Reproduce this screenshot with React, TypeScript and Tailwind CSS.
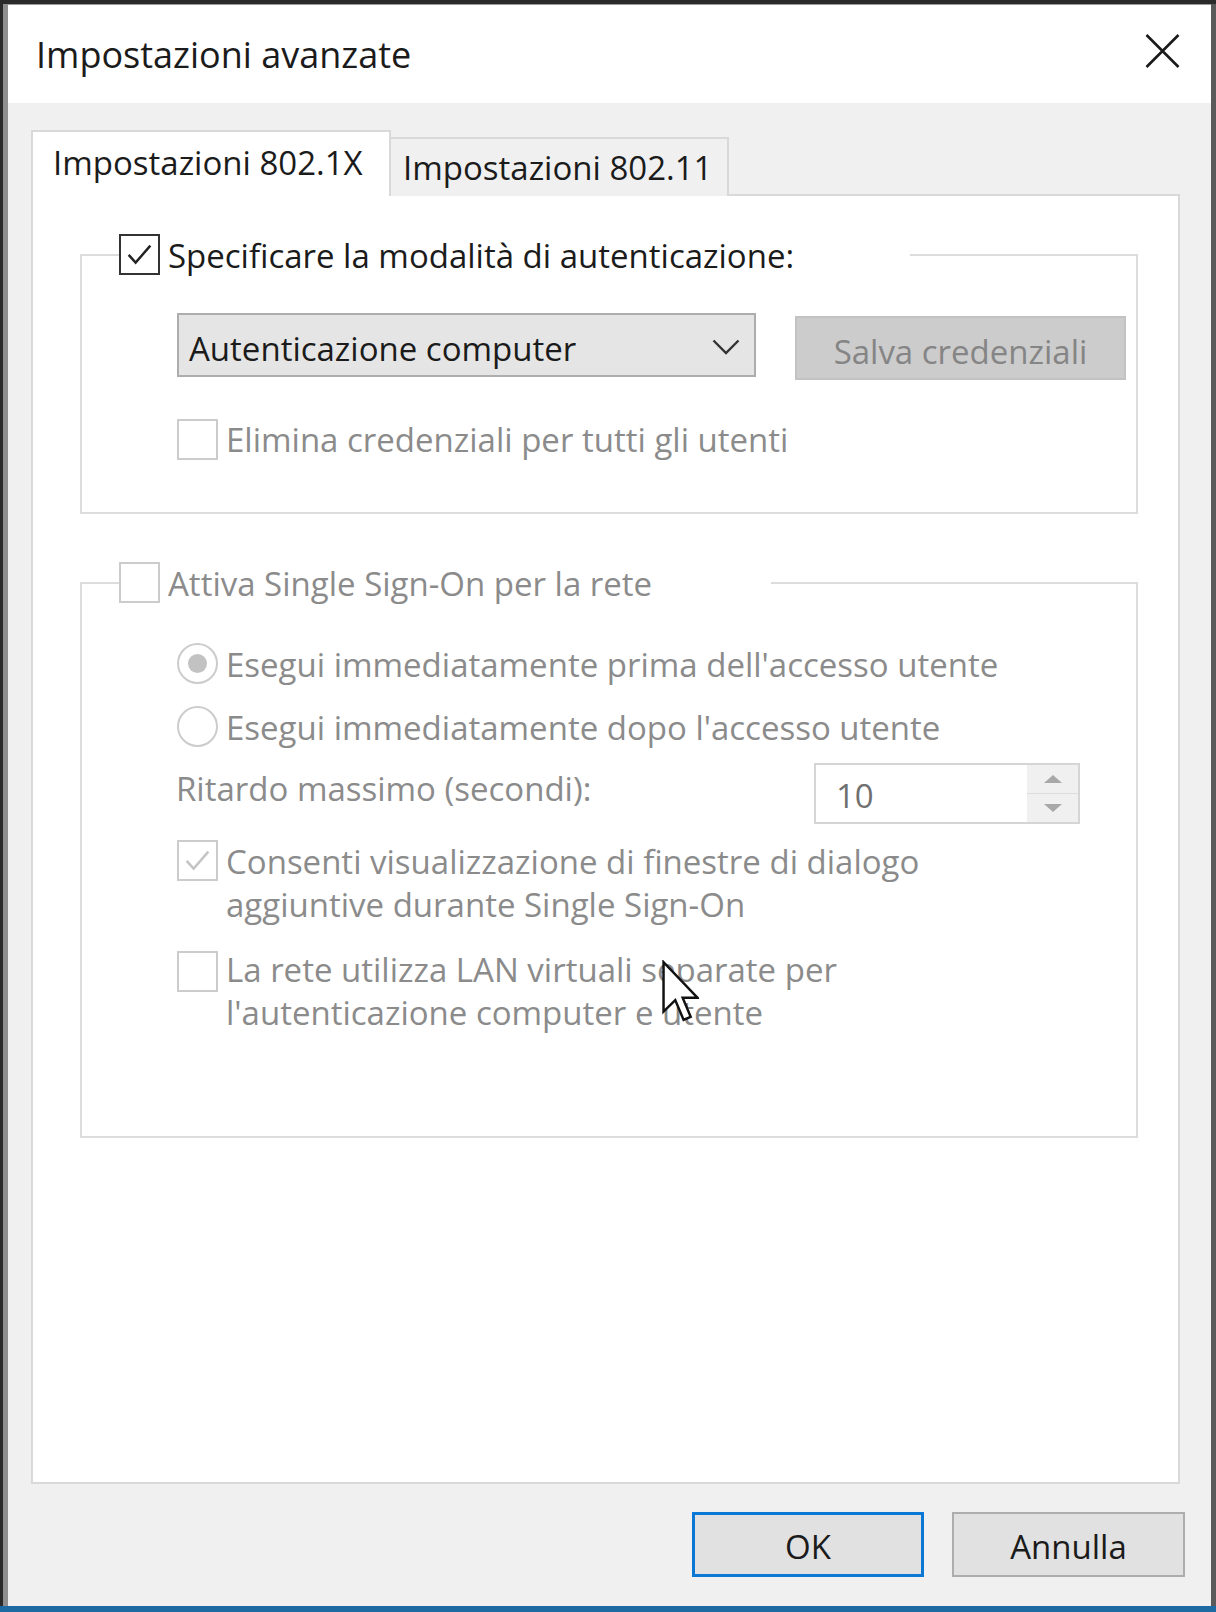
import React from "react";

const font = "font-['Open_Sans','Noto_Sans',sans-serif]";

function CheckMark({ color }: { color: string }) {
  return (
    <svg viewBox="0 0 16 16" className="w-full h-full" fill="none">
      <polyline points="2.4,8.2 6,12.2 13.6,3.4" stroke={color} strokeWidth="1.25" />
    </svg>
  );
}

function Checkbox({ checked, disabled }: { checked?: boolean; disabled?: boolean }) {
  return (
    <div
      className={
        disabled
          ? "w-[41px] h-[41px] shrink-0 border-2 border-[#cccccc] bg-white p-[3px]"
          : "w-[41px] h-[41px] shrink-0 border-2 border-[#333333] bg-white p-[3px]"
      }
    >
      {checked && <CheckMark color={disabled ? "#c4c4c4" : "#222222"} />}
    </div>
  );
}

function Radio({ checked }: { checked?: boolean }) {
  return (
    <div className="w-[41px] h-[41px] shrink-0 rounded-full border-2 border-[#cccccc] bg-white flex items-center justify-center">
      {checked && <div className="w-[19px] h-[19px] rounded-full bg-[#c2c2c2]" />}
    </div>
  );
}

function Cursor() {
  return (
    <svg
      viewBox="0 0 12 20"
      className="absolute left-[662px] top-[960px] w-[37px] h-[63px]"
    >
      <polygon
        points="0.5,0.5 0.5,16.5 4.3,12.8 7,19.2 9.3,18.2 6.7,12 11.5,12"
        fill="#ffffff"
        stroke="#111111"
        strokeWidth="0.8"
        strokeLinejoin="miter"
      />
    </svg>
  );
}

export default function App() {
  return (
    <div className={`relative w-[1216px] h-[1612px] bg-[#2a2a2a] flex flex-col ${font}`}>
      <div className="flex flex-1 pt-[4px] pl-[3px]">
        <div className="w-[5px] bg-[#8e8e8e]" />
        <div className="flex-1 flex flex-col bg-[#f0f0f0] border-t border-[#9a9a9a]">
          {/* title bar */}
          <div className="h-[98px] bg-white flex items-center justify-between pl-[28px] pr-[31px]">
            <span className="text-[36px] text-[#1b1b1b] leading-none pt-[2px]">
              Impostazioni avanzate
            </span>
            <svg viewBox="0 0 34 34" className="w-[35px] h-[34px] mb-[6px]" fill="none">
              <path d="M1 1 L33 33 M33 1 L1 33" stroke="#1a1a1a" strokeWidth="2.6" />
            </svg>
          </div>

          {/* body */}
          <div className="flex-1 flex flex-col pl-[23px] pr-[31px] pt-[27px]">
            {/* tabs */}
            <div className="flex items-end h-[66px] -mb-[2px] relative z-10">
              <div className="w-[360px] h-[66px] bg-white border-2 border-b-0 border-[#d9d9d9] flex items-center pl-[20px] pb-[4px]">
                <span className="text-[33px] text-[#1b1b1b] leading-none">Impostazioni 802.1X</span>
              </div>
              <div className="w-[338px] h-[59px] bg-[#f0f0f0] border-2 border-l-0 border-b-0 border-[#d9d9d9] flex items-center pl-[12px]">
                <span className="text-[33px] text-[#1b1b1b] leading-none">Impostazioni 802.11</span>
              </div>
            </div>

            {/* panel */}
            <div className="h-[1290px] bg-white border-2 border-[#d9d9d9] pl-[47px] pr-[40px] pt-[38px] text-[33px]">
              {/* group 1 */}
              <fieldset className="border-2 border-[#dcdcdc] pb-[52px]">
                <legend className="ml-[37px] w-[791px] h-[41px] flex items-center gap-[8px] text-[#1b1b1b]">
                  <Checkbox checked />
                  <span className="leading-none pt-[2px]">Specificare la modalità di autenticazione:</span>
                </legend>
                <div className="pl-[95px] pt-[38px] flex items-start gap-[39px]">
                  <div className="w-[579px] h-[64px] bg-[#e5e5e5] border-2 border-[#adadad] flex items-center justify-between pl-[10px] pr-[14px]">
                    <span className="text-[#1b1b1b] leading-none pt-[6px]">Autenticazione computer</span>
                    <svg viewBox="0 0 28 16" className="w-[28px] h-[16px] mt-[4px]" fill="none">
                      <path d="M1.5 1.5 L14 14 L26.5 1.5" stroke="#333333" strokeWidth="2.4" />
                    </svg>
                  </div>
                  <div className="mt-[3px] w-[331px] h-[64px] bg-[#cccccc] border-2 border-[#c2c2c2] flex items-center justify-center">
                    <span className="text-[#858585] leading-none pt-[6px]">Salva credenziali</span>
                  </div>
                </div>
                <div className="pl-[95px] pt-[39px] flex items-center gap-[8px]">
                  <Checkbox disabled />
                  <span className="text-[#8b8b8b] leading-none">
                    Elimina credenziali per tutti gli utenti
                  </span>
                </div>
              </fieldset>

              {/* group 2 */}
              <fieldset className="mt-[48px] h-[576px] border-2 border-[#dcdcdc]">
                <legend className="ml-[37px] w-[652px] h-[41px] flex items-center gap-[8px]">
                  <Checkbox disabled />
                  <span className="text-[#8b8b8b] leading-none pt-[2px]">Attiva Single Sign-On per la rete</span>
                </legend>
                <div className="pl-[95px] pt-[39px] flex flex-col text-[#8b8b8b]">
                  <div className="flex items-center gap-[8px] h-[42px]">
                    <Radio checked />
                    <span className="leading-none pt-[2px]">Esegui immediatamente prima dell'accesso utente</span>
                  </div>
                  <div className="mt-[21px] flex items-center gap-[8px] h-[42px]">
                    <Radio />
                    <span className="leading-none pt-[2px]">Esegui immediatamente dopo l'accesso utente</span>
                  </div>
                  <div className="mt-[16px] flex items-start h-[61px]">
                    <span className="w-[638px] -ml-[1px] pt-[4px] leading-[43px]">Ritardo massimo (secondi):</span>
                    <div className="w-[266px] h-[61px] border-2 border-[#d5d5d5] bg-white flex">
                      <div className="flex-1 flex items-center pl-[20px]">
                        <span className="text-[#707070] leading-none pt-[4px]">10</span>
                      </div>
                      <div className="w-[51px] bg-[#f0f0f0] flex flex-col">
                        <div className="flex-1 flex items-center justify-center border-b border-[#dcdcdc]">
                          <svg viewBox="0 0 20 10" className="w-[20px] h-[10px]">
                            <polygon points="10,1 19,9 1,9" fill="#a8a8a8" />
                          </svg>
                        </div>
                        <div className="flex-1 flex items-center justify-center">
                          <svg viewBox="0 0 20 10" className="w-[20px] h-[10px]">
                            <polygon points="1,1 19,1 10,9" fill="#a8a8a8" />
                          </svg>
                        </div>
                      </div>
                    </div>
                  </div>
                  <div className="mt-[16px] flex items-start gap-[8px]">
                    <Checkbox checked disabled />
                    <span className="leading-[43px]">
                      Consenti visualizzazione di finestre di dialogo
                      <br />
                      aggiuntive durante Single Sign-On
                    </span>
                  </div>
                  <div className="mt-[22px] flex items-start gap-[8px]">
                    <div className="mt-[3px]">
                      <Checkbox disabled />
                    </div>
                    <span className="leading-[43px]">
                      La rete utilizza LAN virtuali separate per
                      <br />
                      l'autenticazione computer e utente
                    </span>
                  </div>
                </div>
              </fieldset>
            </div>

            {/* buttons */}
            <div className="flex justify-end gap-[28px] pt-[28px] -mr-[5px]">
              <button className="w-[232px] h-[65px] bg-[#e1e1e1] border-[3px] border-[#0a78d4] text-[33px] text-[#1b1b1b] leading-none pt-[4px]">
                OK
              </button>
              <button className="w-[233px] h-[65px] bg-[#e1e1e1] border-2 border-[#adadad] text-[33px] text-[#1b1b1b] leading-none pt-[4px]">
                Annulla
              </button>
            </div>
          </div>
        </div>
        <div className="w-[5px] bg-[#5a5a5a]" />
      </div>
      <div className="h-[6px] bg-[#1d6aa3]" />
      <Cursor />
    </div>
  );
}
